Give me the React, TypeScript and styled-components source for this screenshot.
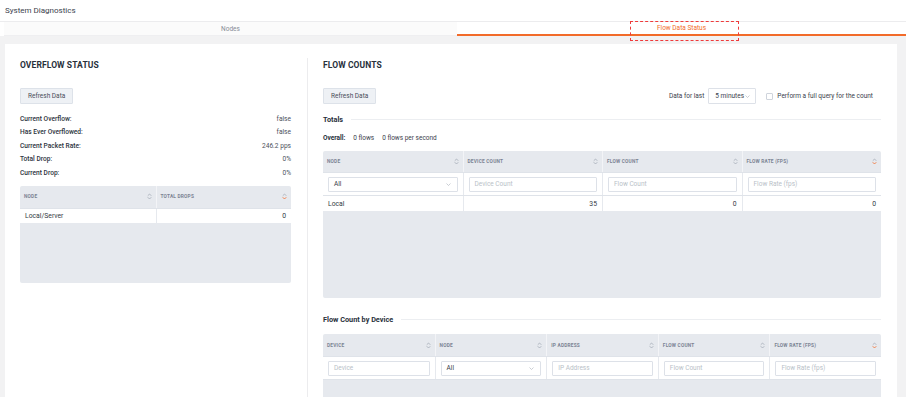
import React from 'react';
import styled, { createGlobalStyle } from 'styled-components';

const GlobalStyle = createGlobalStyle`
    html, body {
        margin: 0;
        padding: 0;
        background: #ffffff;
        font-family: Roboto, "Liberation Sans", Arial, sans-serif;
        color: #333a45;
    }
    * {
        box-sizing: border-box;
    }
`;

const ORANGE = '#f26b2a';

const Page = styled.div`
    width: 906px;
    height: 397px;
    overflow: hidden;
    background: #f2f2f3;
`;

const Header = styled.div`
    height: 21px;
    background: #ffffff;
    display: flex;
    align-items: center;
    padding: 0 5px;
    font-size: 8px;
    color: #3b424d;
`;

const TabBar = styled.div`
    display: grid;
    grid-template-columns: 453px 1fr;
    height: 15px;
    padding-left: 4px;
    background: #ffffff;
    border-top: 1px solid #ececee;
`;

const Tab = styled.div<{ $active?: boolean }>`
    position: relative;
    display: flex;
    align-items: center;
    justify-content: center;
    font-size: 6.5px;
    color: ${(p) => (p.$active ? ORANGE : '#878d97')};
    border-bottom: ${(p) => (p.$active ? `2px solid ${ORANGE}` : '1px solid #efeff1')};
    background: ${(p) => (p.$active ? '#ffffff' : '#fbfbfb')};
`;

const FocusRing = styled.span`
    position: absolute;
    left: 50%;
    top: -1px;
    width: 109px;
    height: 20px;
    margin-left: -52px;
    border: 1px dashed #ef3b3b;
    pointer-events: none;
`;

const Content = styled.div`
    padding: 8px 9px 0 5px;
`;

const Card = styled.div`
    background: #ffffff;
    padding: 12px 16px 0 15px;
    display: grid;
    grid-template-columns: 288px 1fr;
    height: 400px;
`;

const LeftCol = styled.div`
    padding-right: 16px;
    border-right: 1px solid #ececee;
    margin-top: 2px;
`;

const RightCol = styled.div`
    padding-left: 15px;
`;

const Title = styled.h2`
    margin: 0;
    height: 14px;
    line-height: 14px;
    font-size: 8.5px;
    font-weight: 700;
    color: #28303b;
    letter-spacing: 0.1px;
`;

const Button = styled.button`
    font-family: inherit;
    font-size: 6.5px;
    color: #4a505a;
    background: #eef1f5;
    border: 1px solid #dde2e9;
    border-radius: 1px;
    height: 16px;
    padding: 0 7px;
`;

const Toolbar = styled.div`
    display: flex;
    align-items: center;
    justify-content: space-between;
    margin-top: 16px;
`;

const Stats = styled.div`
    margin-top: 9px;
    display: flex;
    flex-direction: column;
`;

const StatRow = styled.div`
    display: flex;
    justify-content: space-between;
    height: 13.4px;
    line-height: 13.4px;
    font-size: 6.6px;
`;

const StatLabel = styled.span`
    font-weight: 500;
    color: #2c333d;
`;

const StatValue = styled.span`
    color: #4c525c;
`;

const TableBox = styled.div<{ $top: number }>`
    margin-top: ${(p) => p.$top}px;
    background: #e6e9ee;
    border-radius: 2px;
    overflow: hidden;
`;

const Row = styled.div<{ $cols: number; $h: number; $white?: boolean }>`
    display: grid;
    grid-template-columns: repeat(${(p) => p.$cols}, 1fr);
    height: ${(p) => p.$h}px;
    background: ${(p) => (p.$white ? '#ffffff' : 'transparent')};
    border-bottom: 1px solid ${(p) => (p.$white ? '#e6e9ee' : '#dfe3e9')};
`;

const HeadCell = styled.div`
    display: flex;
    align-items: center;
    justify-content: space-between;
    padding: 0 4px 0 4px;
    font-size: 4.8px;
    font-weight: 700;
    text-transform: uppercase;
    letter-spacing: 0.2px;
    color: #7b8393;
    & + & {
        border-left: 1px solid #f3f4f7;
    }
`;

const Cell = styled.div<{ $right?: boolean }>`
    display: flex;
    align-items: center;
    justify-content: ${(p) => (p.$right ? 'flex-end' : 'flex-start')};
    padding: 0 5px 0 5px;
    font-size: 6.8px;
    color: #333a45;
    & + & {
        border-left: 1px solid #e6e9ee;
    }
`;

const FilterCell = styled.div`
    display: flex;
    align-items: center;
    padding: 0 5px;
    background: #ffffff;
    & + & {
        border-left: 1px solid #e6e9ee;
    }
`;

const Input = styled.div`
    flex: 1;
    height: 15px;
    border: 1px solid #dde1e8;
    border-radius: 1px;
    display: flex;
    align-items: center;
    justify-content: space-between;
    padding: 0 6px 0 5px;
    font-size: 6.5px;
    color: #b9bfc8;
`;

const SelectText = styled.span`
    color: #333a45;
`;

const Empty = styled.div<{ $h: number }>`
    height: ${(p) => p.$h}px;
`;

const SectionHead = styled.div<{ $top: number }>`
    display: flex;
    align-items: center;
    gap: 8px;
    margin-top: ${(p) => p.$top}px;
    font-size: 7.3px;
    font-weight: 700;
    color: #28303b;
    &::after {
        content: '';
        flex: 1;
        height: 1px;
        background: #eceef1;
    }
`;

const Overall = styled.div`
    display: flex;
    gap: 8px;
    margin-top: 10px;
    font-size: 6.5px;
    color: #3b424d;
    & b {
        font-weight: 700;
        color: #28303b;
    }
`;

const Controls = styled.div`
    display: flex;
    align-items: center;
    margin-right: 8px;
    font-size: 6.5px;
    color: #3b424d;
`;

const Select = styled.div`
    display: flex;
    align-items: center;
    justify-content: space-between;
    width: 48px;
    height: 16px;
    margin-left: 4px;
    padding: 0 5px 0 6px;
    border: 1px solid #dde1e8;
    border-radius: 1px;
    background: #ffffff;
`;

const Checkbox = styled.span`
    width: 7px;
    height: 7px;
    border: 1px solid #cfd4dc;
    border-radius: 1px;
    margin: 0 4px 0 10px;
`;

const Sort: React.FC<{ active?: boolean }> = ({ active }) => (
    <svg width="5" height="7" viewBox="0 0 10 14" fill="none" strokeWidth="1.6" strokeLinecap="round" strokeLinejoin="round">
        <path d="M2 5 L5 2 L8 5" stroke="#a2a9b5" />
        <path d="M2 9 L5 12 L8 9" stroke={active ? ORANGE : '#a2a9b5'} />
    </svg>
);

const Chevron: React.FC = () => (
    <svg width="5" height="3" viewBox="0 0 10 6" fill="none" stroke="#a8aeb8" strokeWidth="1.2">
        <path d="M1 1 L5 5 L9 1" />
    </svg>
);

const HeadRow: React.FC<{ cols: string[]; h: number }> = ({ cols, h }) => (
    <Row $cols={cols.length} $h={h}>
        {cols.map((c, i) => (
            <HeadCell key={c}>
                {c}
                <Sort active={i === cols.length - 1} />
            </HeadCell>
        ))}
    </Row>
);

type Filter = { select?: boolean; text: string };

const FilterRow: React.FC<{ filters: Filter[] }> = ({ filters }) => (
    <Row $cols={filters.length} $h={23}>
        {filters.map((f) => (
            <FilterCell key={f.text}>
                <Input>
                    {f.select ? (
                        <>
                            <SelectText>{f.text}</SelectText>
                            <Chevron />
                        </>
                    ) : (
                        f.text
                    )}
                </Input>
            </FilterCell>
        ))}
    </Row>
);

const stats = [
    ['Current Overflow:', 'false'],
    ['Has Ever Overflowed:', 'false'],
    ['Current Packet Rate:', '246.2 pps'],
    ['Total Drop:', '0%'],
    ['Current Drop:', '0%'],
];

const App: React.FC = () => (
    <Page>
        <GlobalStyle />
        <Header>System Diagnostics</Header>
        <TabBar>
            <Tab>Nodes</Tab>
            <Tab $active>
                Flow Data Status
                <FocusRing />
            </Tab>
        </TabBar>
        <Content>
            <Card>
                <LeftCol>
                    <Title>OVERFLOW STATUS</Title>
                    <Toolbar>
                        <Button>Refresh Data</Button>
                    </Toolbar>
                    <Stats>
                        {stats.map(([label, value]) => (
                            <StatRow key={label}>
                                <StatLabel>{label}</StatLabel>
                                <StatValue>{value}</StatValue>
                            </StatRow>
                        ))}
                    </Stats>
                    <TableBox $top={6}>
                        <HeadRow cols={['Node', 'Total Drops']} h={23} />
                        <Row $cols={2} $h={15} $white>
                            <Cell>Local/Server</Cell>
                            <Cell $right>0</Cell>
                        </Row>
                        <Empty $h={59} />
                    </TableBox>
                </LeftCol>
                <RightCol>
                    <Title style={{ marginTop: 2 }}>FLOW COUNTS</Title>
                    <Toolbar>
                        <Button>Refresh Data</Button>
                        <Controls>
                            Data for last
                            <Select>
                                5 minutes
                                <Chevron />
                            </Select>
                            <Checkbox />
                            Perform a full query for the count
                        </Controls>
                    </Toolbar>
                    <SectionHead $top={11}>Totals</SectionHead>
                    <Overall>
                        <b>Overall:</b>
                        <span>0 flows</span>
                        <span>0 flows per second</span>
                    </Overall>
                    <TableBox $top={9}>
                        <HeadRow cols={['Node', 'Device Count', 'Flow Count', 'Flow Rate (fps)']} h={22} />
                        <FilterRow
                            filters={[
                                { select: true, text: 'All' },
                                { text: 'Device Count' },
                                { text: 'Flow Count' },
                                { text: 'Flow Rate (fps)' },
                            ]}
                        />
                        <Row $cols={4} $h={16} $white>
                            <Cell>Local</Cell>
                            <Cell $right>35</Cell>
                            <Cell $right>0</Cell>
                            <Cell $right>0</Cell>
                        </Row>
                        <Empty $h={86} />
                    </TableBox>
                    <SectionHead $top={17}>Flow Count by Device</SectionHead>
                    <TableBox $top={10}>
                        <HeadRow cols={['Device', 'Node', 'IP Address', 'Flow Count', 'Flow Rate (fps)']} h={23} />
                        <FilterRow
                            filters={[
                                { text: 'Device' },
                                { select: true, text: 'All' },
                                { text: 'IP Address' },
                                { text: 'Flow Count' },
                                { text: 'Flow Rate (fps)' },
                            ]}
                        />
                        <Empty $h={40} />
                    </TableBox>
                </RightCol>
            </Card>
        </Content>
    </Page>
);

export default App;
